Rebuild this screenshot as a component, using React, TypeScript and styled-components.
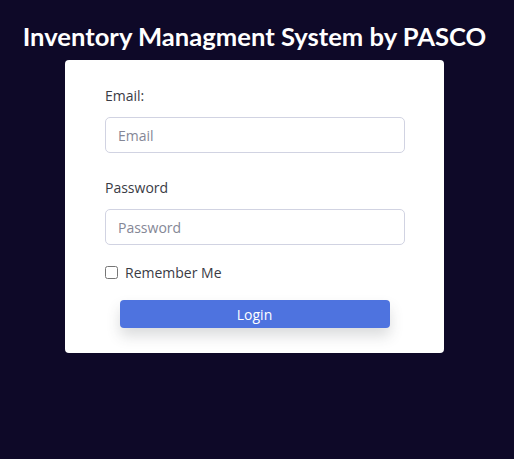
import React from 'react';
import styled, { createGlobalStyle } from 'styled-components';

const GlobalStyle = createGlobalStyle`
  html, body {
    margin: 0;
    padding: 0;
    background-color: #0e0928;
    font-family: "Open Sans", "Noto Sans", Arial, sans-serif;
  }
`;

const Page = styled.div`
  display: flex;
  flex-direction: column;
  align-items: center;
  min-height: 459px;
  padding-right: 5px;
`;

const Title = styled.h1`
  margin: 20px 0 8px;
  font-family: Lato, "Open Sans", sans-serif;
  font-size: 25.6px;
  font-weight: 700;
  color: #ffffff;
  line-height: 32px;
`;

const Card = styled.form`
  width: 379px;
  box-sizing: border-box;
  background-color: #ffffff;
  border-radius: 4px;
  padding: 26px 40px 25px;
  display: flex;
  flex-direction: column;
`;

const Label = styled.label`
  font-size: 14px;
  color: #3a3b45;
  margin-bottom: 12px;
`;

const Input = styled.input`
  width: 300px;
  height: 36px;
  box-sizing: border-box;
  border: 1px solid #d1d3e2;
  border-radius: 5px;
  padding: 0 12px;
  font-family: inherit;
  font-size: 14px;
  color: #6e707e;
  margin-bottom: 25px;

  &::placeholder {
    color: #858796;
  }
`;

const CheckRow = styled.div`
  display: flex;
  align-items: center;
  gap: 7px;
  margin-top: -7px;
  font-size: 14px;
  color: #3a3b45;
`;

const Checkbox = styled.input`
  margin: 0;
  width: 13px;
  height: 13px;
`;

const LoginButton = styled.button`
  align-self: center;
  width: 270px;
  height: 28px;
  margin-top: 18px;
  border: none;
  border-radius: 4px;
  background-color: #4e73df;
  color: #ffffff;
  font-family: inherit;
  font-size: 14px;
  box-shadow: 0 8px 14px rgba(58, 59, 69, 0.18);
`;

const App: React.FC = () => {
  return (
    <Page>
      <GlobalStyle />
      <Title>Inventory Managment System by PASCO</Title>
      <Card onSubmit={(e) => e.preventDefault()}>
        <Label htmlFor="email">Email:</Label>
        <Input id="email" type="email" placeholder="Email" />
        <Label htmlFor="password">Password</Label>
        <Input id="password" type="password" placeholder="Password" />
        <CheckRow>
          <Checkbox id="remember" type="checkbox" />
          <label htmlFor="remember">Remember Me</label>
        </CheckRow>
        <LoginButton type="submit">Login</LoginButton>
      </Card>
    </Page>
  );
};

export default App;
